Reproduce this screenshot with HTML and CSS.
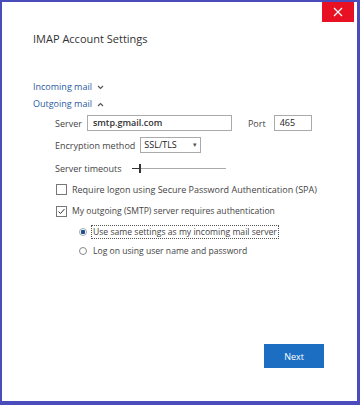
FILE: index.html
```html
<!DOCTYPE html>
<html lang="en">
<head>
    <meta charset="UTF-8">
    <title>IMAP Account Settings</title>
    <link rel="stylesheet" href="styles.css">
</head>
<body>
    <div class="dialog">
        <button class="close-btn" aria-label="Close">
            <svg width="10" height="10" viewBox="0 0 10 10"><path d="M1 1 L9 9 M9 1 L1 9" stroke="#fff" stroke-width="1.2"/></svg>
        </button>

        <h1 class="title">IMAP Account Settings</h1>

        <div class="section-link first">Incoming mail
            <svg class="chev" width="7" height="5" viewBox="0 0 7 5"><path d="M1 1 L3.5 3.5 L6 1" fill="none" stroke="#555" stroke-width="1.2"/></svg>
        </div>
        <div class="section-link">Outgoing mail
            <svg class="chev" width="7" height="5" viewBox="0 0 7 5"><path d="M1 4 L3.5 1.5 L6 4" fill="none" stroke="#555" stroke-width="1.2"/></svg>
        </div>

        <div class="fields">
            <div class="row server-row">
                <span class="label">Server</span>
                <div class="input server">smtp.gmail.com</div>
                <span class="label port-label">Port</span>
                <div class="input port">465</div>
            </div>
            <div class="row">
                <span class="label">Encryption method</span>
                <div class="input select">SSL/TLS <span class="arrow">▾</span></div>
            </div>
            <div class="row timeouts">
                <span class="label">Server timeouts</span>
                <div class="slider"><span class="thumb"></span></div>
            </div>
            <label class="check spa">
                <span class="box"></span>
                Require logon using Secure Password Authentication (SPA)
            </label>
            <label class="check smtp">
                <span class="box">
                    <svg width="9" height="9" viewBox="0 0 9 9"><path d="M1.5 4.5 L3.5 6.5 L7.5 2" fill="none" stroke="#333" stroke-width="1"/></svg>
                </span>
                My outgoing (SMTP) server requires authentication
            </label>
            <div class="radios">
                <label class="radio">
                    <span class="dot checked"></span>
                    <span class="focus">Use same settings as my incoming mail server</span>
                </label>
                <label class="radio">
                    <span class="dot"></span>
                    <span class="plain">Log on using user name and password</span>
                </label>
            </div>
        </div>

        <div class="footer">
            <button class="next-btn">Next</button>
        </div>
    </div>
</body>
</html>
```

FILE: styles.css
```css
body {
    margin: 0;
    padding: 0;
    font-family: 'Open Sans', sans-serif;
    color: #333;
}

.dialog {
    position: relative;
    width: 360px;
    height: 405px;
    box-sizing: border-box;
    border: 2px solid #4a4cbb;
    border-right-width: 3px;
    border-bottom-width: 4px;
    background: #fff;
    padding: 0 0 0 31px;
    display: flex;
    flex-direction: column;
}

.close-btn {
    position: absolute;
    top: 0;
    right: 3px;
    width: 32px;
    height: 20px;
    border: none;
    padding: 0;
    background: #e81123;
    display: flex;
    justify-content: center;
    align-items: center;
}

.title {
    font-size: 11px;
    font-weight: 400;
    margin: 29px 0 0;
    color: #333;
}

.section-link {
    font-size: 9px;
    color: #2b5b9e;
    line-height: 17px;
    display: flex;
    align-items: center;
    gap: 5px;
}

.section-link.first {
    margin-top: 32px;
}

.chev {
    margin-top: 1px;
}

.fields {
    padding-left: 22px;
    font-size: 9px;
    color: #444;
}

.row {
    display: flex;
    align-items: center;
    height: 16px;
    margin-top: 6px;
}

.server-row {
    margin-top: 3px;
}

.label {
    margin-right: 5px;
}

.input {
    height: 16px;
    box-sizing: border-box;
    border: 1px solid #aaa;
    padding: 0 5px;
    line-height: 14px;
    color: #222;
}

.server {
    width: 145px;
    font-weight: 600;
    color: #333;
}

.port-label {
    margin-left: 16px;
    margin-right: 8px;
}

.port {
    width: 38px;
}

.select {
    width: 61px;
    padding: 0 3px;
    display: flex;
    justify-content: space-between;
}

.arrow {
    font-size: 7px;
    color: #555;
}

.timeouts {
    margin-top: 7px;
}

.timeouts .label {
    margin-right: 10px;
}

.slider {
    position: relative;
    width: 94px;
    height: 1px;
    background: #aaa;
}

.slider::before {
    content: "";
    position: absolute;
    left: 0;
    top: 0;
    width: 8px;
    height: 1px;
    background: #333;
}

.thumb {
    position: absolute;
    left: 7px;
    top: -4px;
    width: 2px;
    height: 9px;
    background: #333;
}

.check {
    display: flex;
    align-items: center;
    gap: 5px;
    height: 16px;
}

.spa {
    margin-top: 5px;
}

.smtp {
    margin-top: 6px;
    font-size: 8.6px;
}

.box {
    width: 9px;
    height: 9px;
    border: 1px solid #777;
    display: flex;
    justify-content: center;
    align-items: center;
    margin-left: 1px;
}

.radios {
    padding-left: 24px;
    font-size: 8.6px;
}

.radio {
    display: flex;
    align-items: center;
    gap: 4px;
    height: 16px;
    margin-top: 3px;
}

.radio:first-child {
    margin-top: 5px;
}

.dot {
    width: 8px;
    height: 8px;
    border: 1px solid #888;
    border-radius: 50%;
    box-sizing: border-box;
}

.dot.checked {
    border-color: #9ab;
    background: radial-gradient(circle, #1f4f86 0 2px, #fff 2.5px);
}

.focus {
    border: 1px dotted #555;
    padding: 0 1px;
    line-height: 12px;
}

.plain {
    padding: 0 2px;
}

.footer {
    margin-top: auto;
    margin-bottom: 33px;
    display: flex;
    justify-content: flex-end;
    padding-right: 33px;
}

.next-btn {
    width: 60px;
    height: 24px;
    border: none;
    background: #1b6ec2;
    color: #fff;
    font-family: 'Open Sans', sans-serif;
    font-size: 9px;
}
```
